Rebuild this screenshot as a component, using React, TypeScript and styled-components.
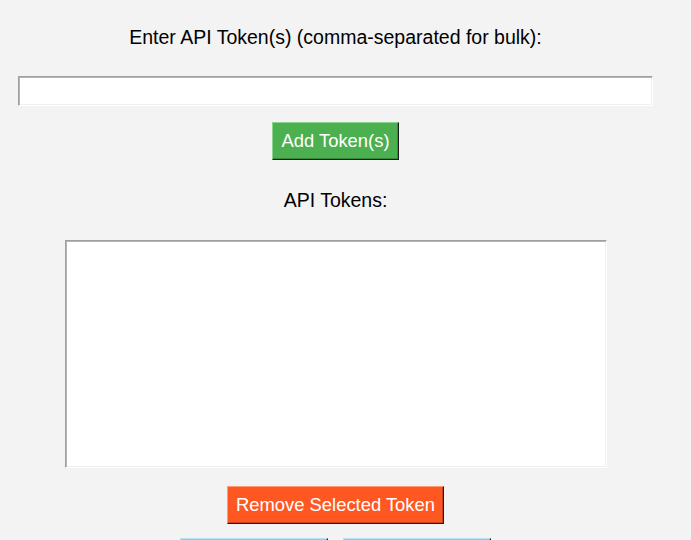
import React from "react";
import styled, { createGlobalStyle } from "styled-components";

const Global = createGlobalStyle`
  html, body {
    margin: 0;
    padding: 0;
    background: #f3f3f3;
    overflow: hidden;
  }
  body {
    font-family: "Liberation Sans", Arial, sans-serif;
  }
`;

const Window = styled.div`
  width: 671px;
  display: flex;
  flex-direction: column;
  align-items: center;
  padding-top: 26px;
`;

const Label = styled.div<{ $gapTop?: number }>`
  font-family: "Liberation Sans", Arial, sans-serif;
  font-size: 19.5px;
  line-height: 22px;
  color: #000;
  margin-top: ${(p) => p.$gapTop ?? 0}px;
  white-space: nowrap;
`;

const Sunken = styled.div<{ $w: number; $h: number; $gapTop: number }>`
  box-sizing: border-box;
  width: ${(p) => p.$w}px;
  height: ${(p) => p.$h}px;
  margin-top: ${(p) => p.$gapTop}px;
  background: #ffffff;
  border-style: solid;
  border-width: 1px;
  border-color: #a0a0a0 #ffffff #ffffff #a0a0a0;
  box-shadow: inset 1px 1px 0 #b4b4b4, inset -1px -1px 0 #f0f0f0;
`;

const TextInput = styled.input`
  box-sizing: border-box;
  width: 100%;
  height: 100%;
  border: none;
  outline: none;
  background: transparent;
  padding: 0 4px;
  font-family: "Liberation Sans", Arial, sans-serif;
  font-size: 16px;
`;

const Button = styled.button<{
  $bg: string;
  $light: string;
  $shade: string;
  $gapTop: number;
  $px?: number;
}>`
  box-sizing: border-box;
  height: 38px;
  margin-top: ${(p) => p.$gapTop}px;
  padding: 0 ${(p) => p.$px ?? 7}px;
  display: inline-flex;
  align-items: center;
  justify-content: center;
  background: ${(p) => p.$bg};
  color: #ffffff;
  font-family: "Liberation Sans", Arial, sans-serif;
  font-size: 18.4px;
  line-height: 1;
  border-style: solid;
  border-width: 1px;
  border-color: ${(p) => p.$light} #1e1e1e #1e1e1e ${(p) => p.$light};
  box-shadow: inset -1px -1px 0 ${(p) => p.$shade};
  cursor: pointer;
  white-space: nowrap;
`;

const ButtonRow = styled.div`
  display: flex;
  gap: 15px;
  margin-top: 14px;
`;

const WideButton = styled(Button)`
  width: 148px;
`;

export default function App() {
  return (
    <>
      <Global />
      <Window>
        <Label>Enter API Token(s) (comma-separated for bulk):</Label>
        <Sunken $w={635} $h={30} $gapTop={28}>
          <TextInput type="text" />
        </Sunken>
        <Button $bg="#4caf50" $light="#8ad48d" $shade="#3a8a3d" $gapTop={16} $px={8}>
          Add Token(s)
        </Button>
        <Label $gapTop={29}>API Tokens:</Label>
        <Sunken $w={542} $h={228} $gapTop={29} />
        <Button $bg="#ff5722" $light="#ff9a7a" $shade="#c8441a" $gapTop={18} $px={7.5}>
          Remove Selected Token
        </Button>
        <ButtonRow>
          <WideButton
            $bg="#87ceeb"
            $light="#b3e2f7"
            $shade="#6aa9c2"
            $gapTop={0}
            aria-label="Import Tokens"
          />
          <WideButton
            $bg="#87ceeb"
            $light="#b3e2f7"
            $shade="#6aa9c2"
            $gapTop={0}
            aria-label="Export Tokens"
          />
        </ButtonRow>
      </Window>
    </>
  );
}
